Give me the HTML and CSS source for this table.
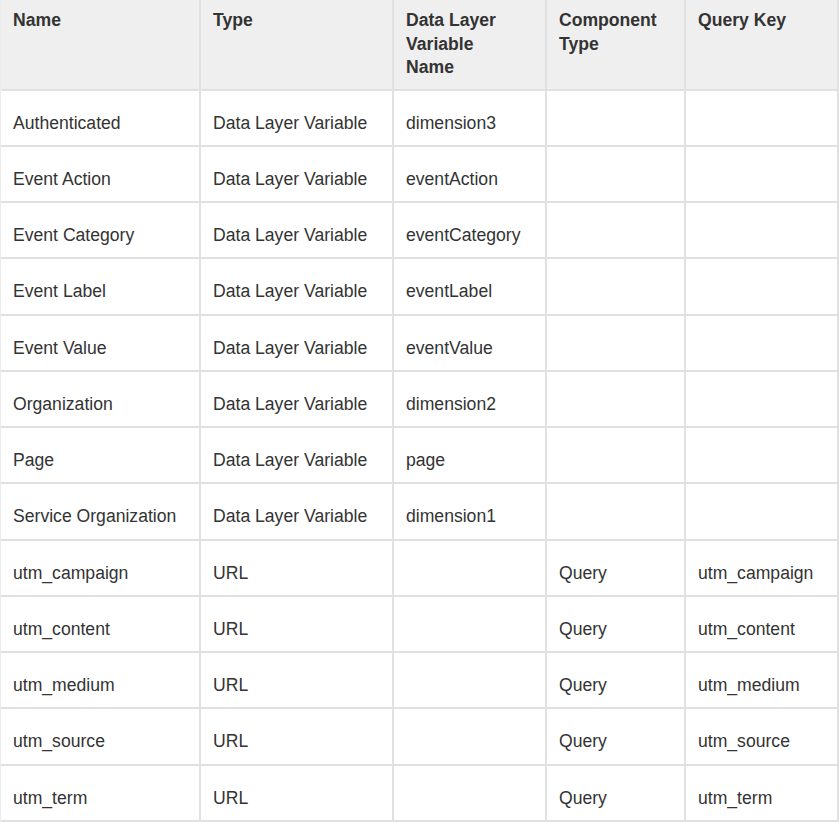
FILE: index.html
```html
<!DOCTYPE html>
<html>
<head>
<meta charset="utf-8">
<link rel="stylesheet" href="styles.css">
</head>
<body>
<table class="vars">
  <thead>
    <tr>
      <th class="c1">Name</th>
      <th class="c2">Type</th>
      <th class="c3">Data Layer Variable<br>Name</th>
      <th class="c4">Component Type</th>
      <th class="c5">Query Key</th>
    </tr>
  </thead>
  <tbody>
    <tr><td>Authenticated</td><td>Data Layer Variable</td><td>dimension3</td><td></td><td></td></tr>
    <tr><td>Event Action</td><td>Data Layer Variable</td><td>eventAction</td><td></td><td></td></tr>
    <tr><td>Event Category</td><td>Data Layer Variable</td><td>eventCategory</td><td></td><td></td></tr>
    <tr><td>Event Label</td><td>Data Layer Variable</td><td>eventLabel</td><td></td><td></td></tr>
    <tr><td>Event Value</td><td>Data Layer Variable</td><td>eventValue</td><td></td><td></td></tr>
    <tr><td>Organization</td><td>Data Layer Variable</td><td>dimension2</td><td></td><td></td></tr>
    <tr><td>Page</td><td>Data Layer Variable</td><td>page</td><td></td><td></td></tr>
    <tr><td>Service Organization</td><td>Data Layer Variable</td><td>dimension1</td><td></td><td></td></tr>
    <tr><td>utm_campaign</td><td>URL</td><td></td><td>Query</td><td>utm_campaign</td></tr>
    <tr><td>utm_content</td><td>URL</td><td></td><td>Query</td><td>utm_content</td></tr>
    <tr><td>utm_medium</td><td>URL</td><td></td><td>Query</td><td>utm_medium</td></tr>
    <tr><td>utm_source</td><td>URL</td><td></td><td>Query</td><td>utm_source</td></tr>
    <tr><td>utm_term</td><td>URL</td><td></td><td>Query</td><td>utm_term</td></tr>
  </tbody>
</table>
</body>
</html>
```
FILE: styles.css
```css
html, body {
  margin: 0;
  padding: 0;
  background: #ffffff;
}
.vars {
  width: 839px;
  table-layout: fixed;
  border-collapse: separate;
  border-spacing: 0;
  border-left: 1px solid #ececec;
  font-family: "Liberation Sans", Arial, sans-serif;
  font-size: 17.6px;
  line-height: 23.25px;
  color: #333333;
}
.vars th,
.vars td {
  box-sizing: border-box;
  border-right: 2px solid #e1e1e1;
  border-bottom: 2px solid #e1e1e1;
  padding: 21px 12px 10px 12px;
  text-align: left;
  vertical-align: top;
}
.vars th {
  background: #efefef;
  font-weight: bold;
  line-height: 23.5px;
  padding-top: 9px;
  padding-bottom: 9px;
}
.c1 { width: 200px; }
.c2 { width: 193px; }
.c3 { width: 153px; }
.c4 { width: 139px; }
.c5 { width: 153px; }
```
